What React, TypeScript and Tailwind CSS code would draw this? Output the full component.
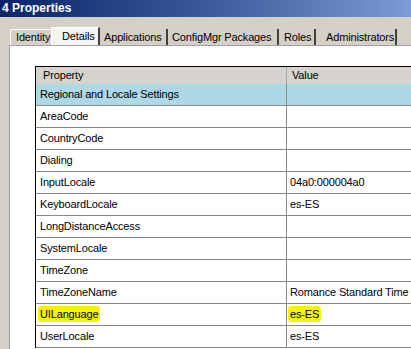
import React from "react";

const rows: { p: string; v: string; hl?: boolean }[] = [
  { p: "AreaCode", v: "" },
  { p: "CountryCode", v: "" },
  { p: "Dialing", v: "" },
  { p: "InputLocale", v: "04a0:000004a0" },
  { p: "KeyboardLocale", v: "es-ES" },
  { p: "LongDistanceAccess", v: "" },
  { p: "SystemLocale", v: "" },
  { p: "TimeZone", v: "" },
  { p: "TimeZoneName", v: "Romance Standard Time" },
  { p: "UILanguage", v: "es-ES", hl: true },
  { p: "UserLocale", v: "es-ES" },
];

export default function App() {
  return (
    <div
      className="w-[411px] h-[349px] overflow-hidden bg-[#d4d0c8] text-[11px] text-black tracking-[-0.15px]"
      style={{ fontFamily: '"Liberation Sans", Arial, sans-serif' }}
    >
      <div className="h-[17px] bg-gradient-to-r from-[#0a246a] via-[#3a5a9a] to-[#7d9bd4] text-white font-bold text-[12px] leading-[17px] pl-[2px] tracking-normal">
        4 Properties
      </div>
      <div className="pl-[10px] flex items-end h-[28px] whitespace-nowrap">
        <div className="shrink-0 w-[42px] h-[16px] pl-[5px] border-l border-t border-white rounded-tl-[2px] flex items-center">
          Identity
        </div>
        <div className="shrink-0 w-[49px] h-[18px] -ml-[1px] pl-[10px] border-l border-t border-white bg-[#f4f4f2] flex items-center pb-[1px] border-r-2 border-r-[#404040] relative z-10">
          Details
        </div>
        <div className="shrink-0 w-[68px] h-[16px] pl-[4px] flex items-center border-r-2 border-r-[#404040]">Applications</div>
        <div className="shrink-0 w-[111px] h-[16px] pl-[4px] flex items-center border-r-2 border-r-[#404040]">ConfigMgr Packages</div>
        <div className="shrink-0 w-[37px] h-[16px] pl-[5px] flex items-center border-r-2 border-r-[#404040]">Roles</div>
        <div className="shrink-0 w-[81px] h-[16px] pl-[10px] flex items-center border-r-2 border-r-[#404040]">Administrators</div>
      </div>
      <div className="ml-[9px] h-[304px] bg-white border-l border-t border-[#a0a0a0] pt-[20px] pl-[25px]">
        <div className="border-l border-t border-black w-[400px]">
          <div className="grid grid-cols-[251px_1fr] h-[17px] bg-[#d6d3ce] leading-[17px]">
            <div className="pl-[7px] border-r border-[#a8a8a8]">Property</div>
            <div className="pl-[5px]">Value</div>
          </div>
          <div className="grid grid-cols-[251px_1fr] h-[22px] bg-[#add8e6] border-b border-[#888888] leading-[21px]">
            <div className="pl-[4px] border-r border-[#888888] whitespace-nowrap">Regional and Locale Settings</div>
            <div />
          </div>
          {rows.map((r) => (
            <div key={r.p} className="grid grid-cols-[251px_1fr] h-[22px] border-b border-[#888888] leading-[21px]">
              <div className="pl-[4px] border-r border-[#888888]">
                {r.hl ? (
                  <span className="bg-[#f4f400] rounded-[3px] px-[2px] -ml-[2px] py-[2px]">{r.p}</span>
                ) : (
                  r.p
                )}
              </div>
              <div className="pl-[3px] whitespace-nowrap">
                {r.hl ? (
                  <span className="bg-[#f4f400] rounded-[3px] px-[2px] -ml-[2px] py-[2px]">{r.v}</span>
                ) : (
                  r.v
                )}
              </div>
            </div>
          ))}
        </div>
      </div>
    </div>
  );
}
